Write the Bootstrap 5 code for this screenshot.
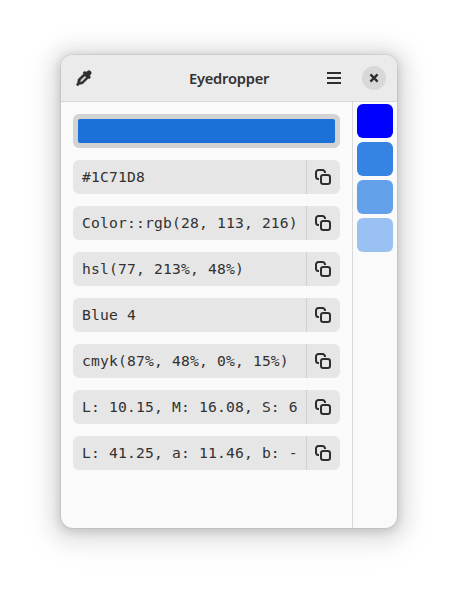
<!DOCTYPE html>
<html lang="en">
<head>
<meta charset="utf-8">
<title>Eyedropper</title>
<link href="https://cdn.jsdelivr.net/npm/bootstrap@5.3.0/dist/css/bootstrap.min.css" rel="stylesheet">
<style>
body{background:#fff;color:#323232;padding:55px 61px;overflow:hidden}
.app-window{width:336px;height:473px;border-radius:12px;background:#fafafa;box-shadow:0 2px 8px 2px rgba(0,0,0,.13),0 3px 20px 10px rgba(0,0,0,.09),0 6px 32px 16px rgba(0,0,0,.04),0 0 0 1px rgba(0,0,0,.05)}
.titlebar{height:47px;background:#ebebeb;border-bottom:1px solid #d8d8d8;display:grid;grid-template-columns:113px 80px 1fr;padding:0 11px 0 15px}
.app-title{font:600 14.667px/46px "Noto Sans",sans-serif;letter-spacing:-.22px;margin:0;white-space:nowrap}
.btn-flat{color:#2e2e2e;padding:0;border:0;width:16px;height:16px;line-height:0}
.btn-menu{margin-right:20px}
.btn-round{width:24px;height:24px;border-radius:50%;background:#d8d8d8}
.formats{padding:12px;gap:12px;width:291px}
.preview{height:34px;border:5px solid #d3d3d3;border-radius:6px;background:#d3d3d3}
.preview-fill{height:24px;border-radius:2px;background:#1c71d8}
.entry{height:34px;border-radius:6px;background:#e6e6e6;overflow:hidden}
.entry-text{width:233px;padding-left:9px;font:14.667px/34px "DejaVu Sans Mono",monospace;letter-spacing:.17px;white-space:nowrap}
.copy-btn{width:34px;height:34px;border:0;border-left:1px solid #d0d0d0;border-radius:0;padding:0 0 0 8px;color:#2e2e2e;line-height:0}
.palette{width:45px;border-left:1px solid #d9d9d9;padding:2px 4px;gap:4px}
.swatch{height:34px;width:36px;border-radius:6px}
svg{display:block;fill:none;stroke:currentColor;stroke-width:2}
</style>
<script src="https://cdn.jsdelivr.net/npm/bootstrap@5.3.0/dist/js/bootstrap.bundle.min.js"></script>
</head>
<body>
<svg class="d-none"><symbol id="copy" viewBox="0 0 16 16"><rect x="6" y="6" width="9" height="9" rx="2.300"/><path d="M4 10H3.500A2.500 2.500 0 0 1 1 7.500V3.500A2.500 2.500 0 0 1 3.500 1H7.500A2.500 2.500 0 0 1 10 3.500V4"/></symbol></svg>
<main class="app-window d-flex flex-column overflow-hidden">
<header class="titlebar align-items-center">
<button class="btn btn-flat" aria-label="Pick a color"><svg width="16" height="16" viewBox="0 0 16 16"><path fill="currentColor" stroke="currentColor" stroke-width=".7" stroke-linejoin="round" fill-rule="evenodd" d="M10.800 2C11.400.7 13 .4 14.200 1.100c1 .7 1.300 2 .6 3L13.700 5.600l.5 1.400c.4 1.100-.9 2-1.800 1.300L12 8.400 6.700 13.700 3.500 14.300 2.200 15.400C1.300 16 .2 15 .8 14L1.600 12.700 2.200 9.300 7.600 3.900 7.500 3.500C6.800 2.500 8 1.300 9.100 1.700l1 .5zM8.900 5.700 4.400 10.100 3.700 12.400l2.300-.7L10.400 7.200z"/></svg></button>
<h1 class="app-title">Eyedropper</h1>
<div class="d-flex align-items-center justify-content-end">
<button class="btn btn-flat btn-menu" aria-label="Menu"><svg width="16" height="16" viewBox="0 0 16 16"><path d="M1 3h14M1 8h14M1 13h14"/></svg></button>
<button class="btn btn-flat btn-round d-flex align-items-center justify-content-center" aria-label="Close"><svg width="16" height="16" viewBox="0 0 16 16"><path stroke-width="2.300" d="M4.400 4.400l7.200 7.200M11.600 4.400l-7.200 7.200"/></svg></button>
</div>
</header>
<div class="d-flex flex-grow-1">
<section class="formats d-flex flex-column">
<div class="preview"><div class="preview-fill"></div></div>
<div class="entry d-flex"><div class="entry-text">#1C71D8</div><button class="btn copy-btn d-flex align-items-center" aria-label="Copy"><svg width="16" height="16"><use href="#copy"/></svg></button></div>
<div class="entry d-flex"><div class="entry-text">Color::rgb(28, 113, 216)</div><button class="btn copy-btn d-flex align-items-center" aria-label="Copy"><svg width="16" height="16"><use href="#copy"/></svg></button></div>
<div class="entry d-flex"><div class="entry-text">hsl(77, 213%, 48%)</div><button class="btn copy-btn d-flex align-items-center" aria-label="Copy"><svg width="16" height="16"><use href="#copy"/></svg></button></div>
<div class="entry d-flex"><div class="entry-text">Blue 4</div><button class="btn copy-btn d-flex align-items-center" aria-label="Copy"><svg width="16" height="16"><use href="#copy"/></svg></button></div>
<div class="entry d-flex"><div class="entry-text">cmyk(87%, 48%, 0%, 15%)</div><button class="btn copy-btn d-flex align-items-center" aria-label="Copy"><svg width="16" height="16"><use href="#copy"/></svg></button></div>
<div class="entry d-flex"><div class="entry-text">L: 10.15, M: 16.08, S: 6</div><button class="btn copy-btn d-flex align-items-center" aria-label="Copy"><svg width="16" height="16"><use href="#copy"/></svg></button></div>
<div class="entry d-flex"><div class="entry-text">L: 41.25, a: 11.46, b: -</div><button class="btn copy-btn d-flex align-items-center" aria-label="Copy"><svg width="16" height="16"><use href="#copy"/></svg></button></div>
</section>
<aside class="palette d-flex flex-column">
<div class="swatch" style="background:#0000ff"></div>
<div class="swatch" style="background:#3584e4"></div>
<div class="swatch" style="background:#62a0ea"></div>
<div class="swatch" style="background:#99c1f1"></div>
</aside>
</div>
</main>
</body>
</html>
